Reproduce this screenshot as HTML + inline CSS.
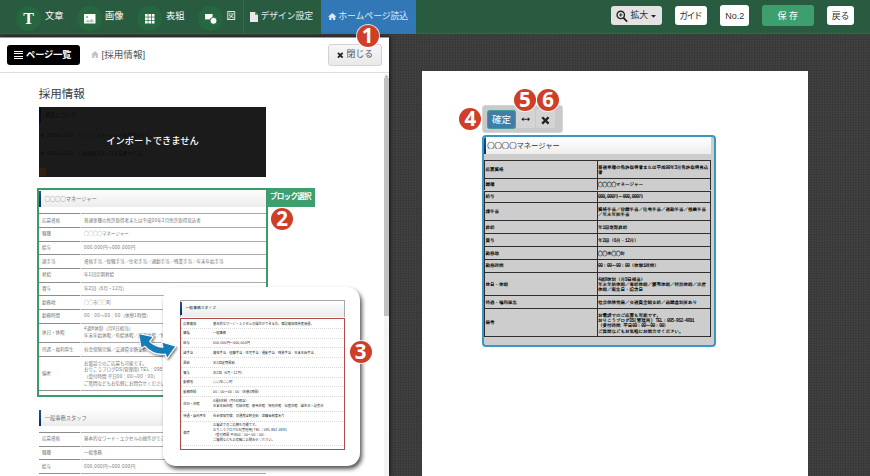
<!DOCTYPE html>
<html lang="ja">
<head>
<meta charset="utf-8">
<title>ホームページ読込</title>
<style>
*{box-sizing:border-box;margin:0;padding:0}
html,body{width:870px;height:476px;overflow:hidden}
body{position:relative;font-family:"Liberation Sans","Noto Sans CJK JP",sans-serif;color:#333;
 background-color:#3c3c3c;}
#bgp{position:absolute;left:0;top:0;width:870px;height:476px}
/* top toolbar */
#bar{position:absolute;left:0;top:0;width:870px;height:34px;background:#295b41;border-bottom:1px solid #44604f}
#bar .ic{position:absolute;top:5.5px;width:25px;height:25px;border-radius:50%;background:#27673f}
#bar .lb{position:absolute;top:8.3px;font-size:9.2px;line-height:16px;color:#fff;white-space:nowrap}
#bar .sep{position:absolute;top:0;width:1px;height:33px;background:#4d5f55}
#bar .tab{position:absolute;top:0;height:33.5px;font-size:8.9px;line-height:32px;color:#e4ebee;white-space:nowrap;letter-spacing:-.1px}
.btn{position:absolute;border-radius:3px;background:#fff;color:#333;font-size:8.9px;text-align:center;white-space:nowrap}
/* left panel */
#panel{position:absolute;left:0;top:37px;width:389px;height:439px;background:#fff;box-shadow:1px 0 4px rgba(0,0,0,.7);overflow:hidden}
#phead{position:absolute;left:0;top:0;width:389px;height:36px;border-bottom:1px solid #ddd;background:#fff}
#plist{position:absolute;left:6.5px;top:8px;width:73px;height:20px;border-radius:3px;background:#000;color:#fff;font-weight:bold;font-size:9.2px;line-height:20px;padding-left:19.6px;white-space:nowrap;letter-spacing:-.1px}
#plist i{position:absolute;left:7px;width:9.6px;height:1.3px;background:#fff}
#crumb{position:absolute;left:101.5px;top:9px;font-size:9.6px;line-height:18px;color:#555;white-space:nowrap}
#close{position:absolute;left:328px;top:7.3px;width:54px;height:21.4px;border:1px solid #d2d2d2;border-radius:3px;background:linear-gradient(#f6f6f6,#e9e9e9);font-size:8.9px;line-height:19px;color:#555;padding-left:17.6px;white-space:nowrap}
#sb{position:absolute;left:384px;top:36.5px;width:5px;height:403px;background:#f3f3f3}
#sb b{position:absolute;left:0;top:4.7px;width:5px;height:237.5px;background:#c1c1c1}
#h1{position:absolute;left:38.8px;top:46.6px;font-size:11.5px;line-height:20px;color:#3a3a3a;white-space:nowrap}
#dark{position:absolute;left:38.8px;top:69.6px;width:227.4px;height:70px;background:#1b1b1b;overflow:hidden}
#dmsg{position:absolute;left:0;top:0;width:100%;color:#fff;font-size:9.3px;text-align:center;line-height:69px;font-weight:500}
.dk{position:absolute;font-size:4.5px;line-height:6px;color:#0b0b0b;white-space:nowrap}
.dk .d{letter-spacing:.08em}
.dc{display:inline-block;width:3px;height:3px;border-radius:50%;border:.8px solid #0b0b0b;margin-right:3px;vertical-align:middle}
/* generic job block (left panel) */
.ttl{position:absolute;border-left:2.3px solid #0f3f7c;border-image:linear-gradient(#1a5ca6,#08295a) 1;background:linear-gradient(#fdfdfd,#ececec);white-space:nowrap;overflow:hidden}
.Ar::before{content:'';position:absolute;left:0;top:-1px;width:41px;height:1px;background:#8c8c8c}
.Ar::after{content:'';position:absolute;left:41px;top:-1px;width:1px;height:1px;background:#dedede}
.Ar{position:absolute;left:39.2px;width:226.8px;border-top:1px solid #ababab;font-size:4.5px;line-height:6.6px;color:#777}
.Al{position:absolute;left:2.9px;top:50%;transform:translateY(-50%);white-space:nowrap}
.Av{position:absolute;left:44.9px;top:50%;transform:translateY(-50%);white-space:nowrap}
.gap{position:absolute;width:1px;background:#fff}
.Ar .d,.Br .d{letter-spacing:.08em}
.Cr .d{letter-spacing:-.1em}
/* popup */
#pop{position:absolute;left:163px;top:286.5px;width:197px;height:179px;border-radius:13px;background:#fff;box-shadow:2px 3px 4px rgba(0,0,0,.68);overflow:hidden}
.Br{position:absolute;left:17.5px;width:164px;border-top:1px dotted #d9d9d9;font-size:3.25px;line-height:4.85px;color:#2a2a2a}
.Bl{position:absolute;left:2.8px;top:50%;transform:translateY(-50%);white-space:nowrap}
.Bv{position:absolute;left:32.6px;top:50%;transform:translateY(-50%);white-space:nowrap}
/* right page */
#page{position:absolute;left:422px;top:71px;width:386px;height:405px;background:#fff}
#tb{position:absolute;left:60.4px;top:33.7px;width:80.5px;height:28.6px;border-radius:3px;background:#c9c9c9;border:1px solid #d6d6d6}
#ok{position:absolute;left:3.6px;top:3.9px;width:29px;height:19.2px;border-radius:2.5px;background:#3f7fa6;border:1px solid #4b9a9a;color:#fff;font-size:9.5px;line-height:17px;text-align:center}
.tbb{position:absolute;top:3.7px;width:19px;height:19px;border-radius:2px;background:#d4d4d4;color:#222;text-align:center}
#blk{position:absolute;left:60.1px;top:63.5px;width:233.6px;height:212.4px;border:2px solid #3b97c2;border-radius:4px;background:#cdcdcd;overflow:hidden}
.Cr{position:absolute;left:0.3px;width:226.4px;border:1px solid #2e2e2e;border-bottom:0;font-family:"Liberation Mono","IPAGothic",monospace;font-size:4.5px;line-height:5.2px;color:#000}
.Cl{position:absolute;left:0;top:50%;transform:translateY(-50%);margin-top:.5px;white-space:nowrap}
.Cv{position:absolute;left:112.6px;top:50%;transform:translateY(-50%);margin-top:.5px;width:112px}
.Cc{position:absolute;left:111.4px;top:0;bottom:0;width:1px;background:#2e2e2e}
.o{font-family:"Noto Sans CJK JP",sans-serif}
#blk .ttl .o{-webkit-text-stroke:.2px #444}
.Cr{-webkit-text-stroke:.12px #000}
.Cr .o{-webkit-text-stroke:.25px #222}
/* number badges */
.num{position:absolute;width:22px;height:22px;border-radius:50%;background:#cf3e26;color:#fff;box-shadow:0 0 0 1px rgba(255,255,255,.8)}
.num span{display:block;font-weight:bold;font-size:20.5px;line-height:22px;height:22px;text-align:center;font-family:"Noto Sans","Noto Sans CJK JP","Liberation Sans",sans-serif;transform:translateY(-1px)}
</style>
</head>
<body>
<svg id="bgp" width="870" height="476" viewBox="0 0 870 476"><defs><pattern id="grid" width="2.6" height="2.6" patternUnits="userSpaceOnUse"><rect width="2.6" height="2.6" fill="#454545"/><rect width="1.1" height="2.6" fill="#373737"/><rect width="2.6" height="1.1" fill="#373737" opacity=".8"/></pattern></defs><rect width="870" height="476" fill="url(#grid)"/></svg>
<div id="bar">
  <div class="ic" style="left:16px"><span style="position:absolute;left:0;top:0;width:25px;height:25px;line-height:25px;text-align:center;font-family:'Liberation Serif',serif;font-weight:bold;font-size:16px;color:#fff">T</span></div><div class="lb" style="left:45px">文章</div>
  <div class="ic" style="left:77px"><svg width="25" height="25" viewBox="0 0 25 25"><rect x="7" y="8" width="11.5" height="9.5" rx=".6" fill="#fff"/><circle cx="10" cy="11" r="1.2" fill="#9db5a6"/><path d="M8.2 16.2l2.6-2.8 1.8 1.6 2-2.4 2.8 3.6z" fill="#b4c7bb"/></svg></div><div class="lb" style="left:105px">画像</div>
  <div class="ic" style="left:137px"><svg width="25" height="25" viewBox="0 0 25 25"><g fill="#fff"><rect x="8" y="8" width="2.7" height="2.7"/><rect x="11.4" y="8" width="2.7" height="2.7"/><rect x="14.8" y="8" width="2.7" height="2.7"/><rect x="8" y="11.4" width="2.7" height="2.7"/><rect x="11.4" y="11.4" width="2.7" height="2.7"/><rect x="14.8" y="11.4" width="2.7" height="2.7"/><rect x="8" y="14.8" width="2.7" height="2.7"/><rect x="11.4" y="14.8" width="2.7" height="2.7"/><rect x="14.8" y="14.8" width="2.7" height="2.7"/></g></svg></div><div class="lb" style="left:166px">表組</div>
  <div class="ic" style="left:198px"><svg width="25" height="25" viewBox="0 0 25 25"><rect x="7" y="8" width="7.6" height="5.4" fill="#fff"/><circle cx="15.5" cy="14.8" r="3.5" fill="#fff" stroke="#27673f" stroke-width=".9"/></svg></div><div class="lb" style="left:226.5px">図</div>
  <div class="sep" style="left:243px"></div>
  <svg style="position:absolute;left:250px;top:11.5px" width="8" height="10" viewBox="0 0 8 10"><path d="M0 0h5l3 3v7H0z" fill="#e8e8e8"/><path d="M5 0v3h3z" fill="#2b5d43" opacity=".6"/></svg>
  <div class="tab" style="left:260.5px">デザイン設定</div>
  <div class="tab" style="left:321px;width:95px;background:#3277b6"><svg style="position:absolute;left:6.5px;top:12.5px" width="8.5" height="7.5" viewBox="0 0 9 8"><path d="M4.5 0L0 4h1.3v4h2.4V5.4h1.6V8h2.4V4H9z" fill="#dfe8f0"/></svg><span style="position:absolute;left:17.3px">ホームページ読込</span></div>
  <div class="btn" style="left:611px;top:6px;width:51px;height:19px;line-height:19px;background:#e3e3e3;text-align:left;padding-left:19.4px"><svg style="position:absolute;left:5.3px;top:3.8px" width="11.4" height="12.4" viewBox="0 0 11 12"><circle cx="4.6" cy="4.8" r="3.6" fill="none" stroke="#222" stroke-width="1.3"/><path d="M7.3 7.6l3 3.2" stroke="#222" stroke-width="1.7" stroke-linecap="round"/><path d="M2.9 4.8h3.4M4.6 3.1v3.4" stroke="#222" stroke-width=".9"/></svg>拡大<svg style="position:absolute;left:40.3px;top:8.8px" width="5" height="3.4" viewBox="0 0 6 4"><path d="M0 0h6L3 3.4z" fill="#222"/></svg></div>
  <div class="btn" style="left:675px;top:6px;width:32px;height:19px;line-height:20.4px;letter-spacing:-1.6px;padding-right:1.6px">ガイド</div>
  <div class="btn" style="left:720px;top:4.7px;width:29.3px;height:21.6px;line-height:22.6px;font-size:9px">No.2</div>
  <div class="btn" style="left:762px;top:4.7px;width:51.5px;height:21.6px;line-height:22.6px;background:#3e9f6e;color:#fff;font-size:9px">保 存</div>
  <div class="btn" style="left:827px;top:6px;width:27px;height:19px;line-height:20px">戻る</div>
</div>

<div id="panel">
  <div id="h1">採用情報</div>
  <div id="dark">
    <div class="dk" style="left:0;top:0;width:2.3px;height:16px;background:#04101f"></div>
    <div class="dk" style="left:6.5px;top:5px;font-size:5.2px">募集について</div>
    <div class="dk" style="left:2.5px;top:25.5px"><span class="dc"></span><span class="d">2000-11-01</span>　<span class="o">○○○○</span>マネージャーを募集中です。</div>
    <div class="dk" style="left:2.5px;top:44.5px"><span class="dc"></span><span class="d">2000-11-01</span>　一般事務スタッフを募集中です。</div>
    <div class="dk" style="left:0;top:61.5px;width:7px;height:7.5px;background:#33200a;border-radius:1px"></div>
    <div id="dmsg">インポートできません</div>
  </div>
  <div class="ttl" style="left:39.2px;top:154.2px;width:226.8px;height:16.3px;font-size:5.25px;line-height:16.3px;padding-left:3.5px;color:#777;"><span class="o">○○○○</span>マネージャー</div>
  <div class="Ar" style="top:176.30px;height:13.70px"><div class="Al">応募資格</div><div class="Av">普通車種の免許取得者または平成<span class="d">00</span>年<span class="d">3</span>月免許取得見込者</div></div>
<div class="Ar" style="top:190.00px;height:13.70px"><div class="Al">職種</div><div class="Av"><span class="o">○○○○</span>マネージャー</div></div>
<div class="Ar" style="top:203.70px;height:13.70px"><div class="Al">給与</div><div class="Av"><span class="d">000,000</span>円～<span class="d">000,000</span>円</div></div>
<div class="Ar" style="top:217.40px;height:13.70px"><div class="Al">諸手当</div><div class="Av">資格手当／役職手当／住宅手当／通勤手当／残業手当／年末年始手当</div></div>
<div class="Ar" style="top:231.10px;height:13.60px"><div class="Al">昇給</div><div class="Av">年<span class="d">1</span>回定期昇給</div></div>
<div class="Ar" style="top:244.70px;height:13.70px"><div class="Al">賞与</div><div class="Av">年<span class="d">2</span>回（<span class="d">6</span>月・<span class="d">12</span>月）</div></div>
<div class="Ar" style="top:258.40px;height:13.60px"><div class="Al">勤務地</div><div class="Av"><span class="o">○○</span>市<span class="o">○○</span>町</div></div>
<div class="Ar" style="top:272.00px;height:13.60px"><div class="Al">勤務時間</div><div class="Av"><span class="d">00</span>：<span class="d">00</span>～<span class="d">00</span>：<span class="d">00</span>（休憩<span class="d">1</span>時間）</div></div>
<div class="Ar" style="top:285.60px;height:19.70px"><div class="Al">休日・休暇</div><div class="Av"><span class="d">4</span>週<span class="d">8</span>休制（月<span class="d">9</span>日相当）<br>年末年始休暇／有給休暇／慶弔休暇／特別休暇／出産休暇／誕生日・記念日</div></div>
<div class="Ar" style="top:305.30px;height:13.90px"><div class="Al">待遇・福利厚生</div><div class="Av">社会保険完備／交通費全額支給／退職金制度あり</div></div>
<div class="Ar" style="top:319.20px;height:34.10px"><div class="Al">備考</div><div class="Av">お電話でのご応募も可能です。<br>おりこうブログ<span class="d">DS</span>(管理用) <span class="d">TEL</span>：<span class="d">095-862-4891</span><br>（受付時間 平日<span class="d">00</span>：<span class="d">00</span>～<span class="d">00</span>：<span class="d">00</span>）<br>ご質問などもお気軽にお問合せください。</div></div>
  <div class="Ar" style="top:353.30px;height:1px"></div>
  <div style="position:absolute;left:37.3px;top:151.1px;width:230.4px;height:208.6px;border:2px solid #3a9c69"></div>
  <div style="position:absolute;left:267px;top:151.1px;width:47.6px;height:19.3px;background:#3e9f6e;color:#fff;font-weight:bold;font-size:7.6px;line-height:18.6px;text-align:center;white-space:nowrap;letter-spacing:-.75px;padding-right:.75px">ブロック選択</div>
  <div class="ttl" style="left:39.2px;top:372.7px;width:226.8px;height:16.3px;font-size:5.25px;line-height:16.3px;padding-left:3.5px;color:#777;">一般事務スタッフ</div>
  <div class="Ar" style="top:394.80px;height:13.70px"><div class="Al">応募資格</div><div class="Av">基本的なワード・エクセルの操作ができる方。簿記資格保持者優遇。</div></div>
<div class="Ar" style="top:408.50px;height:13.70px"><div class="Al">職種</div><div class="Av">一般事務</div></div>
<div class="Ar" style="top:422.20px;height:13.70px"><div class="Al">給与</div><div class="Av"><span class="d">000,000</span>円～<span class="d">000,000</span>円</div></div>
<div class="Ar" style="top:435.90px;height:13.70px"><div class="Al">諸手当</div><div class="Av">資格手当／役職手当／住宅手当／通勤手当／残業手当／年末年始手当</div></div>
<div class="Ar" style="top:449.60px;height:13.60px"><div class="Al">昇給</div><div class="Av">年<span class="d">1</span>回定期昇給</div></div>
<div class="Ar" style="top:463.20px;height:13.70px"><div class="Al">賞与</div><div class="Av">年<span class="d">2</span>回（<span class="d">6</span>月・<span class="d">12</span>月）</div></div>
<div class="Ar" style="top:476.90px;height:13.60px"><div class="Al">勤務地</div><div class="Av"><span class="o">○○</span>市<span class="o">○○</span>町</div></div>
<div class="Ar" style="top:490.50px;height:13.60px"><div class="Al">勤務時間</div><div class="Av"><span class="d">00</span>：<span class="d">00</span>～<span class="d">00</span>：<span class="d">00</span>（休憩<span class="d">1</span>時間）</div></div>
<div class="Ar" style="top:504.10px;height:19.70px"><div class="Al">休日・休暇</div><div class="Av"><span class="d">4</span>週<span class="d">8</span>休制（月<span class="d">9</span>日相当）<br>年末年始休暇／有給休暇／慶弔休暇／特別休暇／出産休暇／誕生日・記念日</div></div>
<div class="Ar" style="top:523.80px;height:13.90px"><div class="Al">待遇・福利厚生</div><div class="Av">社会保険完備／交通費全額支給／退職金制度あり</div></div>
<div class="Ar" style="top:537.70px;height:34.10px"><div class="Al">備考</div><div class="Av">お電話でのご応募も可能です。<br>おりこうブログ<span class="d">DS</span>(管理用) <span class="d">TEL</span>：<span class="d">095-862-4891</span><br>（受付時間 平日<span class="d">00</span>：<span class="d">00</span>～<span class="d">00</span>：<span class="d">00</span>）<br>ご質問などもお気軽にお問合せください。</div></div>
  <div id="phead">
    <div id="plist"><i style="top:5.8px"></i><i style="top:8.2px"></i><i style="top:10.6px"></i><i style="top:13px"></i>ページ一覧</div>
    <svg style="position:absolute;left:91px;top:14px" width="8" height="7" viewBox="0 0 9 8"><path d="M4.5 0L0 4h1.3v4h2.4V5.4h1.6V8h2.4V4H9z" fill="#c4c4c4"/></svg>
    <div id="crumb">[採用情報]</div>
    <div id="close"><svg style="position:absolute;left:8px;top:6.4px" width="6.6" height="6.6" viewBox="0 0 7 7"><path d="M1 1l5 5M6 1L1 6" stroke="#222" stroke-width="1.9"/></svg>閉じる</div>
  </div>
  <div id="sb"><svg style="position:absolute;left:0;top:0" width="5" height="5" viewBox="0 0 5 5"><path d="M2.5 1.3L4.3 3.6H.7z" fill="#9a9a9a"/></svg><b></b></div>
  <div style="position:absolute;left:0;top:0;width:389px;height:1px;background:#9c9c9c"></div>
</div>

<div id="page">
  <div id="tb">
    <div id="ok">確定</div>
    <div class="tbb" style="left:32.5px"><svg style="position:absolute;left:4.7px;top:8px" width="9.4" height="4.4" viewBox="0 0 10 5"><path d="M0 2.5L2.6 0.3v1.7h4.8V0.3L10 2.5 7.4 4.7V3H2.6v1.7z" fill="#222"/></svg></div>
    <div class="tbb" style="left:53px"><svg style="position:absolute;left:4.6px;top:6.4px" width="8.8" height="8.8" viewBox="0 0 8 8"><path d="M1.1 1.1l5.8 5.8M6.9 1.1L1.1 6.9" stroke="#222" stroke-width="2.1"/></svg></div>
  </div>
  <div id="blk">
    <div class="ttl" style="left:0px;top:0.3px;width:227px;height:17px;font-size:7.3px;line-height:17px;padding-left:1.2px;color:#333;border-left-color:#0f3f7c;background:linear-gradient(#fff,#ededed)"><span class="o">○○○○</span>マネージャー</div>
    <div class="Cr" style="top:23.80px;height:17.50px"><div class="Cl">応募資格</div><div class="Cc"></div><div class="Cv">普通車種の免許取得者または平成<span class="d">00</span>年<span class="d">3</span>月免許取得見込者</div></div>
<div class="Cr" style="top:41.30px;height:12.70px"><div class="Cl">職種</div><div class="Cc"></div><div class="Cv"><span class="o">○○○○</span>マネージャー</div></div>
<div class="Cr" style="top:54.00px;height:11.90px"><div class="Cl">給与</div><div class="Cc"></div><div class="Cv"><span class="d">000,000</span>円～<span class="d">000,000</span>円</div></div>
<div class="Cr" style="top:65.90px;height:17.80px"><div class="Cl">諸手当</div><div class="Cc"></div><div class="Cv">資格手当／役職手当／住宅手当／通勤手当／残業手当／年末年始手当</div></div>
<div class="Cr" style="top:83.70px;height:12.90px"><div class="Cl">昇給</div><div class="Cc"></div><div class="Cv">年<span class="d">1</span>回定期昇給</div></div>
<div class="Cr" style="top:96.60px;height:12.90px"><div class="Cl">賞与</div><div class="Cc"></div><div class="Cv">年<span class="d">2</span>回（<span class="d">6</span>月・<span class="d">12</span>月）</div></div>
<div class="Cr" style="top:109.50px;height:13.00px"><div class="Cl">勤務地</div><div class="Cc"></div><div class="Cv"><span class="o">○○</span>市<span class="o">○○</span>町</div></div>
<div class="Cr" style="top:122.50px;height:12.90px"><div class="Cl">勤務時間</div><div class="Cc"></div><div class="Cv"><span class="d">00</span>：<span class="d">00</span>～<span class="d">00</span>：<span class="d">00</span>（休憩<span class="d">1</span>時間）</div></div>
<div class="Cr" style="top:135.40px;height:23.30px"><div class="Cl">休日・休暇</div><div class="Cc"></div><div class="Cv"><span class="d">4</span>週<span class="d">8</span>休制（月<span class="d">9</span>日相当）<br>年末年始休暇／有給休暇／慶弔休暇／特別休暇／出産休暇／誕生日・記念日</div></div>
<div class="Cr" style="top:158.70px;height:13.00px"><div class="Cl">待遇・福利厚生</div><div class="Cc"></div><div class="Cv">社会保険完備／交通費全額支給／退職金制度あり</div></div>
<div class="Cr" style="top:171.70px;height:27.80px"><div class="Cl">備考</div><div class="Cc"></div><div class="Cv">お電話でのご応募も可能です。<br>おりこうブログ<span class="d">DS</span>(管理用) <span class="d">TEL</span>：<span class="d">095-862-4891</span><br>（受付時間 平日<span class="d">00</span>：<span class="d">00</span>～<span class="d">00</span>：<span class="d">00</span>）<br>ご質問などもお気軽にお問合せください。</div></div>
<div class="Cr" style="top:199.50px;height:1px"></div>
  </div>
</div>

<div id="pop">
  <div style="position:absolute;left:16.5px;top:13.8px;width:165.5px;height:16.4px;border:1px solid #a9a9a9;border-bottom:0;background:linear-gradient(#fff,#ebebeb)"></div>
  <div class="ttl" style="left:17.2px;top:15px;width:164px;height:13.6px;font-size:3.8px;line-height:13.6px;padding-left:3.4px;color:#1a1a1a;background:none">一般事務スタッフ</div>
  <div class="Br" style="top:31.90px;height:9.40px"><div class="Bl">応募資格</div><div class="Bv">基本的なワード・エクセルの操作ができる方。簿記資格保持者優遇。</div></div>
<div class="Br" style="top:41.30px;height:9.70px"><div class="Bl">職種</div><div class="Bv">一般事務</div></div>
<div class="Br" style="top:51.00px;height:9.90px"><div class="Bl">給与</div><div class="Bv"><span class="d">000,000</span>円～<span class="d">000,000</span>円</div></div>
<div class="Br" style="top:60.90px;height:9.90px"><div class="Bl">諸手当</div><div class="Bv">資格手当／役職手当／住宅手当／通勤手当／残業手当／年末年始手当</div></div>
<div class="Br" style="top:70.80px;height:10.00px"><div class="Bl">昇給</div><div class="Bv">年<span class="d">1</span>回定期昇給</div></div>
<div class="Br" style="top:80.80px;height:9.80px"><div class="Bl">賞与</div><div class="Bv">年<span class="d">2</span>回（<span class="d">6</span>月・<span class="d">12</span>月）</div></div>
<div class="Br" style="top:90.60px;height:9.30px"><div class="Bl">勤務地</div><div class="Bv"><span class="o">○○</span>市<span class="o">○○</span>町</div></div>
<div class="Br" style="top:99.90px;height:10.00px"><div class="Bl">勤務時間</div><div class="Bv"><span class="d">00</span>：<span class="d">00</span>～<span class="d">00</span>：<span class="d">00</span>（休憩<span class="d">1</span>時間）</div></div>
<div class="Br" style="top:109.90px;height:14.80px"><div class="Bl">休日・休暇</div><div class="Bv"><span class="d">4</span>週<span class="d">8</span>休制（月<span class="d">9</span>日相当）<br>年末年始休暇／有給休暇／慶弔休暇／特別休暇／出産休暇／誕生日・記念日</div></div>
<div class="Br" style="top:124.70px;height:9.30px"><div class="Bl">待遇・福利厚生</div><div class="Bv">社会保険完備／交通費全額支給／退職金制度あり</div></div>
<div class="Br" style="top:134.00px;height:24.80px"><div class="Bl">備考</div><div class="Bv">お電話でのご応募も可能です。<br>おりこうブログ<span class="d">DS</span>(管理用) <span class="d">TEL</span>：<span class="d">095-862-4891</span><br>（受付時間 平日<span class="d">00</span>：<span class="d">00</span>～<span class="d">00</span>：<span class="d">00</span>）<br>ご質問などもお気軽にお問合せください。</div></div>
  <div class="Br" style="top:158.80px;height:1px"></div>
  <div style="position:absolute;left:16.5px;top:31px;width:165.8px;height:132.4px;border:1.3px solid #b04a4a"></div>
</div>

<svg style="position:absolute;left:132px;top:326px;overflow:visible" width="52" height="40" viewBox="132 326 52 40">
  <defs><filter id="ds" x="-20%" y="-20%" width="150%" height="150%"><feDropShadow dx="1.2" dy="1.5" stdDeviation="1" flood-color="#000" flood-opacity=".55"/></filter></defs>
  <path filter="url(#ds)" d="M139.2 334.2L152.4 337L149 341.6Q155.5 348.2 163.6 347.6L162.4 342.7L175.1 346.5L167.1 357.4L165.8 353.6Q153.5 355.2 144.9 345.6L141.6 347.4Z" fill="#187bb7" stroke="#fff" stroke-width="2.1" stroke-linejoin="round" paint-order="stroke"/>
</svg>

<div class="num" style="left:356.5px;top:24.700000000000003px"><span>1</span></div>
<div class="num" style="left:271px;top:208px"><span>2</span></div>
<div class="num" style="left:349.5px;top:341px"><span>3</span></div>
<div class="num" style="left:459.4px;top:107.6px"><span>4</span></div>
<div class="num" style="left:513.9px;top:88.9px"><span>5</span></div>
<div class="num" style="left:537px;top:88.9px"><span>6</span></div>
</body>
</html>
